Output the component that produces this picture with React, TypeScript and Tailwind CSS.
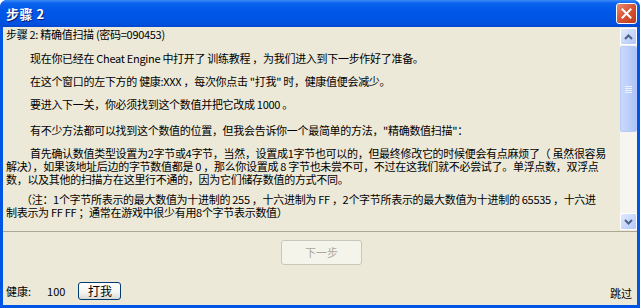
import React from "react";

const font = "font-['Noto_Sans_CJK_SC','Liberation_Sans',sans-serif]";

function CloseButton() {
  return (
    <div className="w-[21px] h-[21px] rounded-[3px] border border-white bg-[linear-gradient(135deg,#EB8F72_0%,#D9583A_45%,#C03A18_100%)] flex items-center justify-center shadow-[inset_0_0_1px_rgba(0,0,0,0.3)]">
      <svg width="11" height="11" viewBox="0 0 11 11">
        <path d="M1.5 1.5 L9.5 9.5 M9.5 1.5 L1.5 9.5" stroke="white" strokeWidth="2" strokeLinecap="square" />
      </svg>
    </div>
  );
}

function ScrollArrow({ up }: { up: boolean }) {
  return (
    <div className="w-[17px] h-[17px] shrink-0 rounded-[2px] border border-[#FFFFFF] bg-[linear-gradient(135deg,#E1EAFE_0%,#C4D5FC_60%,#B4C8F6_100%)] flex items-center justify-center">
      <svg width="9" height="6" viewBox="0 0 9 6">
        <path d={up ? "M1 5 L4.5 1.5 L8 5" : "M1 1 L4.5 4.5 L8 1"} stroke="#4D6185" strokeWidth="2" fill="none" />
      </svg>
    </div>
  );
}

function Scrollbar() {
  return (
    <div className="w-[17px] h-full flex flex-col bg-[#F6F5EF]">
      <ScrollArrow up />
      <div className="flex-1 flex flex-col">
        <div className="h-[86px] mt-[1px] rounded-[2px] border border-[#B6C9F7] bg-[linear-gradient(90deg,#C9D8FC_0%,#BCCFFB_50%,#AFC4F6_100%)] flex flex-col items-center justify-center gap-[1px]">
          <div className="w-[7px] h-[1px] bg-[#EEF4FE]" />
          <div className="w-[7px] h-[1px] bg-[#EEF4FE]" />
          <div className="w-[7px] h-[1px] bg-[#EEF4FE]" />
          <div className="w-[7px] h-[1px] bg-[#EEF4FE]" />
        </div>
        <div className="flex-1" />
      </div>
      <ScrollArrow up={false} />
    </div>
  );
}

export default function App() {
  return (
    <div className={`w-[640px] h-[308px] bg-white overflow-hidden ${font}`}>
      <div className="w-full h-full flex flex-col rounded-t-[7px] overflow-hidden bg-[#0055E5]">
        {/* title bar */}
        <div className="h-[27px] shrink-0 flex items-center pl-[6px] pr-[3px] bg-[linear-gradient(to_bottom,#3C8CF6_0%,#0A62EE_12%,#0058E8_40%,#0055E5_70%,#0050DD_90%,#0047CF_100%)]">
          <div className="flex-1 text-white font-bold text-[13px] leading-[13px] [text-shadow:1px_1px_0_#0A1E6E] tracking-[0.5px]">
            步骤 2
          </div>
          <CloseButton />
        </div>
        {/* body */}
        <div className="flex-1 flex flex-col mx-[3px] mb-[3px] bg-[#ECE9D8]">
          {/* memo */}
          <div className="h-[205px] shrink-0 flex border-b border-[#ACA899]">
            <div className="flex-1 min-w-0 overflow-hidden pl-[3px] pt-[1px] text-[11px] leading-[13px] tracking-[-0.3px] text-black whitespace-nowrap">
              <div>步骤 2: 精确值扫描 (密码=090453)</div>
              <div className="mt-[11px] pl-[24px]">现在你已经在 Cheat Engine 中打开了 训练教程 ，为我们进入到下一步作好了准备。</div>
              <div className="mt-[10px] pl-[24px]">在这个窗口的左下方的 健康:XXX ，每次你点击 "打我" 时，健康值便会减少。</div>
              <div className="mt-[10px] pl-[24px]">要进入下一关，你必须找到这个数值并把它改成 1000 。</div>
              <div className="mt-[13px] pl-[24px]">有不少方法都可以找到这个数值的位置，但我会告诉你一个最简单的方法，"精确数值扫描"：</div>
              <div className="mt-[10px]">
                <div className="pl-[24px]">首先确认数值类型设置为2字节或4字节，当然，设置成1字节也可以的，但最终修改它的时候便会有点麻烦了（ 虽然很容易</div>
                <div>解决），如果该地址后边的字节数值都是 0 ，那么你设置成 8 字节也未尝不可，不过在这我们就不必尝试了。单浮点数，双浮点</div>
                <div>数，以及其他的扫描方在这里行不通的，因为它们储存数值的方式不同。</div>
              </div>
              <div className="mt-[7px]">
                <div className="pl-[15px]">（注：1个字节所表示的最大数值为十进制的 255 ，十六进制为 FF ，2个字节所表示的最大数值为十进制的 65535 ，十六进</div>
                <div>制表示为 FF FF ；通常在游戏中很少有用8个字节表示数值）</div>
              </div>
            </div>
            <div className="shrink-0 pt-[1px] pb-[1px]">
              <Scrollbar />
            </div>
          </div>
          {/* next button */}
          <div className="flex justify-center mt-[8px] pl-[3px]">
            <div className="w-[81px] h-[25px] rounded-[3px] border border-[#C9C7BA] bg-[#F5F4EA] flex items-center justify-center text-[11px] text-[#ACA899]">
              下一步
            </div>
          </div>
          <div className="flex-1" />
          {/* bottom row */}
          <div className="flex items-center h-[18px] mb-[5px] pl-[3px] pr-[5px] text-[11px] text-black">
            <span>健康:</span>
            <span className="ml-[16px]">100</span>
            <div className="ml-[13px] w-[43px] h-[18px] rounded-[3px] border border-[#003C74] bg-[linear-gradient(to_bottom,#FFFFFF_0%,#F4F4F0_60%,#DCDAD0_100%)] flex items-center justify-center text-[12px]">
              打我
            </div>
            <div className="flex-1" />
            <span className="mt-[4px]">跳过</span>
          </div>
        </div>
      </div>
    </div>
  );
}
